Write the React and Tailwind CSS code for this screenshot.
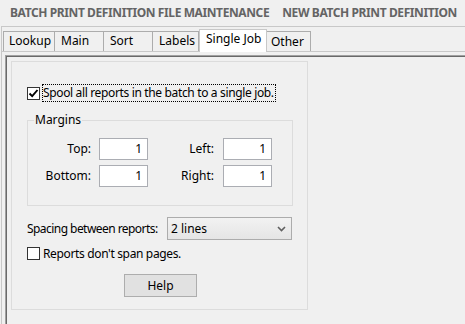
import React from "react";

function Check({ checked }) {
  return (
    <div className="w-[13px] h-[13px] border border-[#333333] bg-white flex items-center justify-center shrink-0">
      {checked && (
        <svg width="11" height="11" viewBox="0 0 11 11">
          <path d="M1.5 5.5 L4.2 8.2 L9.5 2" stroke="#000" strokeWidth="1.9" fill="none" />
        </svg>
      )}
    </div>
  );
}

function Field({ value }) {
  return (
    <div className="w-[49px] h-[22px] border border-[#abadb3] bg-white flex items-center justify-end pr-[5px] leading-none">
      {value}
    </div>
  );
}

export default function App() {
  return (
    <div className="w-[465px] h-[324px] bg-[#f0f0f0] overflow-hidden font-['Noto_Sans',sans-serif] text-[12px] text-black">
      <div className="h-[26px] flex items-center pl-[10px] gap-[13px] font-bold text-[12px] text-[#646464] tracking-[-0.4px]">
        <span>BATCH PRINT DEFINITION FILE MAINTENANCE</span>
        <span>NEW BATCH PRINT DEFINITION</span>
      </div>
      <div className="ml-[1px] border-t border-l border-[#c8c8c8] h-[298px]">
        <div className="flex items-end h-[24px] pl-[1px]">
          <div className="w-[52px] h-[20px] border border-b-0 border-[#acacac] pl-[5px] leading-[18px]">Lookup</div>
          <div className="w-[49px] h-[20px] border border-b-0 border-l-0 border-[#acacac] pl-[6px] leading-[18px]">Main</div>
          <div className="w-[49px] h-[20px] border border-b-0 border-l-0 border-[#acacac] pl-[6px] leading-[18px]">Sort</div>
          <div className="w-[46px] h-[20px] border border-b-0 border-l-0 border-[#acacac] pl-[6px] leading-[18px]">Labels</div>
          <div className="relative z-10 w-[68px] h-[23px] -mb-px border border-b-0 border-[#c8c8c8] bg-white pl-[6px] leading-[17px]">Single Job</div>
          <div className="w-[44px] h-[20px] border border-b-0 border-l-0 border-[#acacac] pl-[4px] leading-[20px]">Other</div>
        </div>
        <div className="border-t border-[#c8c8c8] pt-[3px] pl-[3px] h-[273px]">
          <div className="border-t border-l border-[#a0a0a0] h-[270px]">
            <div className="border-t border-l border-[#696969] pt-[4px] pl-[4px] h-[269px]">
              <div className="w-[297px] h-[249px] border border-[#dcdcdc] pl-[15px]">
                <div className="mt-[22px] flex items-center h-[18px]">
                  <Check checked />
                  <div className="ml-[2px] h-[18px] border border-dotted border-black leading-[16px] pr-[1px] tracking-[-0.35px]">
                    Spool all reports in the batch to a single job.
                  </div>
                </div>
                <fieldset className="mt-[10px] w-[266px] border border-[#dcdcdc] pb-[18px]">
                  <legend className="ml-[6px] px-[1px] leading-[16px]">Margins</legend>
                  <div className="pt-[10px] flex items-center h-[32px]">
                    <div className="w-[63px] text-right">Top:</div>
                    <div className="ml-[8px]"><Field value="1" /></div>
                    <div className="w-[66px] text-right">Left:</div>
                    <div className="ml-[9px]"><Field value="1" /></div>
                  </div>
                  <div className="mt-[5px] flex items-center h-[22px]">
                    <div className="w-[63px] text-right">Bottom:</div>
                    <div className="ml-[8px]"><Field value="1" /></div>
                    <div className="w-[66px] text-right">Right:</div>
                    <div className="ml-[9px]"><Field value="1" /></div>
                  </div>
                </fieldset>
                <div className="mt-[11px] flex items-center h-[23px]">
                  <div className="w-[140px] tracking-[-0.55px]">Spacing between reports:</div>
                  <div className="w-[125px] h-[23px] border border-[#acacac] bg-gradient-to-b from-[#f2f2f2] to-[#e5e5e5] flex items-center justify-between pl-[3px] pr-[5px]">
                    <span>2 lines</span>
                    <svg width="9" height="6" viewBox="0 0 9 6">
                      <path d="M1 1 L4.5 4.5 L8 1" stroke="#606060" strokeWidth="1.6" fill="none" />
                    </svg>
                  </div>
                </div>
                <div className="mt-[7px] flex items-center h-[13px]">
                  <Check />
                  <span className="ml-[3px] tracking-[-0.35px]">Reports don't span pages.</span>
                </div>
                <div className="mt-[14px] ml-[97px] w-[73px] h-[23px] border border-[#adadad] bg-[#e1e1e1] flex items-center justify-center">
                  Help
                </div>
              </div>
            </div>
          </div>
        </div>
      </div>
    </div>
  );
}
